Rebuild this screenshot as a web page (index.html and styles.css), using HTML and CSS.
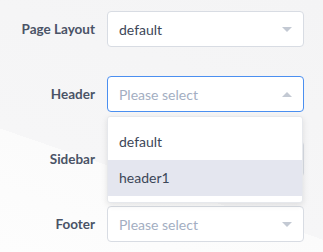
FILE: index.html
```html
<!DOCTYPE html>
<html lang="en">
<head>
    <meta charset="UTF-8">
    <title>Layout Settings</title>
    <link rel="stylesheet" href="styles.css">
</head>
<body>
    <form class="settings">
        <div class="row">
            <label class="row-label">Page Layout</label>
            <div class="field">
                <div class="select">
                    <span class="value">default</span>
                    <span class="caret"></span>
                </div>
            </div>
        </div>
        <div class="row">
            <label class="row-label">Header</label>
            <div class="field">
                <div class="select open">
                    <span class="placeholder">Please select</span>
                    <span class="caret up"></span>
                </div>
                <ul class="menu">
                    <li class="option">default</li>
                    <li class="option active">header1</li>
                </ul>
            </div>
        </div>
        <div class="row">
            <label class="row-label">Sidebar</label>
            <div class="field">
                <div class="select">
                    <span class="placeholder">Please select</span>
                    <span class="caret"></span>
                </div>
            </div>
        </div>
        <div class="row">
            <label class="row-label">Footer</label>
            <div class="field">
                <div class="select">
                    <span class="placeholder">Please select</span>
                    <span class="caret"></span>
                </div>
            </div>
        </div>
    </form>
</body>
</html>
```

FILE: styles.css
```css
/* Base */
body {
    margin: 0;
    font-family: Lato, "Open Sans", sans-serif;
    background: linear-gradient(199deg, #f4f4f5 0%, #f6f6f7 66%, #fbfbfb 66%, #fdfdfd 100%);
    height: 252px;
    overflow: hidden;
}

.settings {
    display: flex;
    flex-direction: column;
    gap: 29px;
    padding-top: 11px;
}

.row {
    display: flex;
    align-items: center;
    gap: 12px;
}

.row-label {
    width: 95px;
    text-align: right;
    font-size: 13.5px;
    font-weight: bold;
    color: #4a5366;
}

.field {
    position: relative;
    width: 197px;
}

.select {
    box-sizing: border-box;
    height: 36px;
    display: flex;
    align-items: center;
    justify-content: space-between;
    padding: 0 11px 0 11px;
    background: #fff;
    border: 1px solid #d8dce3;
    border-radius: 4px;
    font-size: 14px;
}

.select.open {
    border-color: #4b8ff0;
}

.value {
    color: #3c4658;
}

.placeholder {
    color: #a3aec2;
}

.caret {
    width: 0;
    height: 0;
    border-left: 5px solid transparent;
    border-right: 5px solid transparent;
    border-top: 5px solid #c3c9d3;
}

.caret.up {
    border-top: none;
    border-bottom: 5px solid #c3c9d3;
}

/* Dropdown */
.menu {
    position: absolute;
    top: 40px;
    left: 0;
    right: 1px;
    margin: 0;
    padding: 7px 0 6px;
    list-style: none;
    background: #fff;
    border: 1px solid #e6e8ec;
    border-radius: 3px;
    box-shadow: 0 2px 6px rgba(0, 0, 0, 0.1);
    z-index: 2;
}

.option {
    height: 36px;
    line-height: 36px;
    padding-left: 11px;
    font-size: 14px;
    color: #3c4658;
}

.option.active {
    background-color: #e4e6ef;
}
```
